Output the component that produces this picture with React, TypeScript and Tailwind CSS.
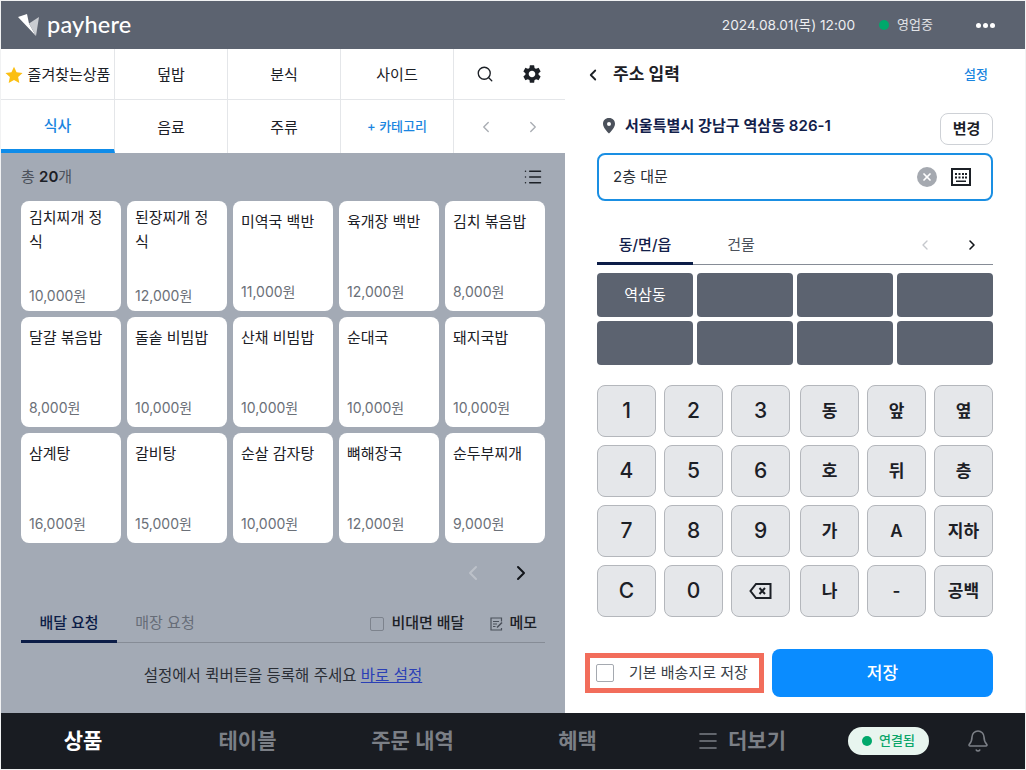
import React from 'react';
import { ChevronLeft, ChevronRight, Search, List, Bell, Menu, X } from 'lucide-react';
import { MdSettings } from 'react-icons/md';

const font = "font-['Inter','Noto_Sans_CJK_KR',sans-serif]";

const menuItems = [
  ['김치찌개 정식', '10,000원'],
  ['된장찌개 정식', '12,000원'],
  ['미역국 백반', '11,000원'],
  ['육개장 백반', '12,000원'],
  ['김치 볶음밥', '8,000원'],
  ['달걀 볶음밥', '8,000원'],
  ['돌솥 비빔밥', '10,000원'],
  ['산채 비빔밥', '10,000원'],
  ['순대국', '10,000원'],
  ['돼지국밥', '10,000원'],
  ['삼계탕', '16,000원'],
  ['갈비탕', '15,000원'],
  ['순살 감자탕', '10,000원'],
  ['뼈해장국', '12,000원'],
  ['순두부찌개', '9,000원'],
];

const keyRows = [
  ['1', '2', '3', '동', '앞', '옆'],
  ['4', '5', '6', '호', '뒤', '층'],
  ['7', '8', '9', '가', 'A', '지하'],
  ['C', '0', 'back', '나', '-', '공백'],
];

const Logo = () => (
  <svg width="21" height="22" viewBox="0 0 21 22">
    <path d="M0 3 L9 0 L11 9.5 L18 22 Z" fill="#ffffff" />
    <path d="M11 9.5 L21 3 L18 22 Z" fill="#c9ccd1" />
  </svg>
);

const Star = () => (
  <svg width="18" height="18" viewBox="0 0 24 24" className="mr-[5px] shrink-0">
    <path d="M12 1 L15.4 8.4 L23.4 9.3 L17.5 14.8 L19.1 22.8 L12 18.8 L4.9 22.8 L6.5 14.8 L0.6 9.3 L8.6 8.4 Z" fill="#fbbf12" />
  </svg>
);

const Pin = () => (
  <svg width="14" height="16" viewBox="0 0 14 16" className="mr-[9px] shrink-0">
    <path fillRule="evenodd" d="M7 0 C3.2 0 1 2.7 1 5.8 C1 9.6 5 13.6 7 15.6 C9 13.6 13 9.6 13 5.8 C13 2.7 10.8 0 7 0 Z M7 4 A2 2 0 1 1 7 8 A2 2 0 1 1 7 4 Z" fill="#4b515b" />
  </svg>
);

const KeyboardIcon = () => (
  <svg width="20" height="18" viewBox="0 0 20 18" className="shrink-0">
    <rect x="1" y="1" width="18" height="16" fill="none" stroke="#1c2026" strokeWidth="2" />
    <path d="M4 5h2v2H4zM7.5 5h2v2h-2zM11 5h2v2h-2zM14 5h2v2h-2zM4 8.5h2v2H4zM7.5 8.5h2v2h-2zM11 8.5h2v2h-2zM14 8.5h2v2h-2zM5 12.5h10v1.5H5z" fill="#1c2026" />
  </svg>
);

const BackspaceIcon = () => (
  <svg width="23" height="18" viewBox="0 0 23 18">
    <path d="M7 2 H21.5 V16 H7 L1.5 9 Z" fill="none" stroke="#1c2026" strokeWidth="2" strokeLinejoin="miter" />
    <path d="M10.5 6 L16 12 M16 6 L10.5 12" stroke="#1c2026" strokeWidth="2" />
  </svg>
);

const MemoIcon = () => (
  <svg width="13" height="14" viewBox="0 0 13 14" className="mr-[6px] shrink-0">
    <path d="M11.5 4.5 V1 H1 V13 H11.5 V11" fill="none" stroke="#4b515b" strokeWidth="1.2" />
    <path d="M3 4.5 H9 M3 7 H7 M3 9.5 H5.5" stroke="#4b515b" strokeWidth="1.1" />
    <path d="M7 10.5 L12 5.5" stroke="#4b515b" strokeWidth="1.6" />
  </svg>
);

const Key = ({ label }: { label: string }) => (
  <button className="w-[59px] h-[52px] rounded-lg bg-[#e5e7ea] border border-[#b4b7bc] flex items-center justify-center text-[#1c2026]">
    {label === 'back' ? (
      <BackspaceIcon />
    ) : (
      <span className={/[0-9C]/.test(label) ? 'text-[21px] font-medium' : 'text-[17px] font-semibold pt-px'}>{label}</span>
    )}
  </button>
);

const LeftPanel = () => (
  <div className="w-[564px] flex flex-col bg-[#a3aab5]">
    <div className="bg-white grid grid-cols-[114px_113px_113px_113px_1fr] text-[15px] text-[#1c2026]">
      <div className="h-[51px] flex items-center justify-center border-r border-b border-[#e4e6e9] pt-[2px] whitespace-nowrap">
        <Star />즐겨찾는상품
      </div>
      <div className="h-[51px] flex items-center justify-center border-r border-b border-[#e4e6e9] pt-[2px]">덮밥</div>
      <div className="h-[51px] flex items-center justify-center border-r border-b border-[#e4e6e9] pt-[2px]">분식</div>
      <div className="h-[51px] flex items-center justify-center border-r border-b border-[#e4e6e9] pt-[2px]">사이드</div>
      <div className="h-[51px] flex items-center justify-around px-[9px] border-b border-[#e4e6e9]">
        <Search className="w-[18px] h-[18px]" strokeWidth={1.8} />
        <MdSettings className="w-[22px] h-[22px]" />
      </div>
      <div className="h-[53px] flex items-center justify-center border-r border-[#e4e6e9] border-b-4 border-b-[#0f8ce9] text-[#1a85e0] font-medium pt-[3px]">식사</div>
      <div className="h-[53px] flex items-center justify-center border-r border-[#e4e6e9] pt-[3px]">음료</div>
      <div className="h-[53px] flex items-center justify-center border-r border-[#e4e6e9] pt-[3px]">주류</div>
      <div className="h-[53px] flex items-center justify-center border-r border-[#e4e6e9] text-[13px] font-medium text-[#1a85e0] pt-px">+ 카테고리</div>
      <div className="h-[53px] flex items-center justify-around px-[9px] text-[#a9adb3]">
        <ChevronLeft className="w-[18px] h-[18px]" strokeWidth={1.8} />
        <ChevronRight className="w-[18px] h-[18px]" strokeWidth={1.8} />
      </div>
    </div>

    <div className="flex-1 flex flex-col px-5">
      <div className="h-12 flex items-center justify-between text-[15px] text-[#4b515b]">
        <span className="pt-px">총 <b className="font-semibold text-[#1c2026]">20</b>개</span>
        <List className="w-[20px] h-[20px] mr-[2px] text-[#1c2026]" strokeWidth={1.8} />
      </div>
      <div className="grid grid-cols-[repeat(5,100px)] auto-rows-[110px] gap-[6px]">
        {menuItems.map(([name, price]) => {
          // two-line names sit a little higher, and their price a little lower
          const wrapped = name.length > 6;
          return (
            <div key={name} className={`bg-white rounded-lg px-2 flex flex-col justify-between ${wrapped ? 'pt-[5px] pb-[5px]' : 'pt-[9px] pb-[9px]'}`}>
              <div className="text-[15px] leading-[24px] text-[#1c2026]">{name}</div>
              <div className="text-[14px] leading-5 text-[#6b7078]">{price}</div>
            </div>
          );
        })}
      </div>
      <div className="h-[60px] flex items-center justify-end gap-[24px] pr-[12px]">
        <ChevronLeft className="w-6 h-6 text-[#bcc1c9]" strokeWidth={2} />
        <ChevronRight className="w-6 h-6 text-[#12151a]" strokeWidth={2} />
      </div>
      <div className="h-10 flex items-stretch border-b border-[#868c96] text-[15px]">
        <div className="w-24 -mb-px border-b-[3px] border-[#0c1d47] flex items-center justify-center font-medium text-[#0c1d47] pt-[3px]">배달 요청</div>
        <div className="w-24 flex items-center justify-center text-[#666c77] pt-[2px]">매장 요청</div>
        <div className="ml-auto flex items-center pr-2 text-[#1c2026] font-medium pt-[2px]">
          <span className="w-[14px] h-[14px] border border-[#7d838d] rounded-[2px] mr-[7px]" />
          <span>비대면 배달</span>
          <span className="w-[26px]" />
          <MemoIcon />
          <span>메모</span>
        </div>
      </div>
      <div className="h-16 flex items-center justify-center text-[15.5px] text-[#2a2e35] pt-px">
        설정에서 퀵버튼을 등록해 주세요&nbsp;<span className="underline text-[#2a3fb5]">바로 설정</span>
      </div>
    </div>
  </div>
);

const RightPanel = () => (
  <div className="flex-1 bg-white flex flex-col px-8">
    <div className="h-[52px] flex items-center text-[#1c2026]">
      <ChevronLeft className="w-[18px] h-[18px] -ml-[13px]" strokeWidth={2.4} />
      <span className="ml-[11px] text-[17px] font-semibold">주소 입력</span>
      <span className="ml-auto mr-[5px] text-[13px] font-medium text-[#1a85e0]">설정</span>
    </div>
    <div className="mt-3 h-8 flex justify-between">
      <div className="flex items-center h-6 pl-[5px] text-[15px] font-semibold text-[#12204a] pt-[2px] tracking-[0.05px]">
        <Pin />
        서울특별시 강남구 역삼동 826-1
      </div>
      <button className="w-[53px] h-8 rounded-lg border border-[#ced1d6] text-[15px] font-semibold text-[#1c2026]">변경</button>
    </div>
    <div className="mt-2 h-12 rounded-lg border-2 border-[#1a8fe3] flex items-center pl-[14px] pr-[20px] text-[15px] text-[#2a2e35]">
      <span className="pt-px">2층 대문</span>
      <span className="ml-auto w-5 h-5 rounded-full bg-[#a5a9b0] flex items-center justify-center mr-[14px]">
        <X className="w-3 h-3 text-white" strokeWidth={3.5} />
      </span>
      <KeyboardIcon />
    </div>
    <div className="mt-6 h-10 flex items-stretch border-b border-[#868c96] text-[15px]">
      <div className="w-24 -mb-px border-b-[3px] border-[#0c1d47] flex items-center justify-center font-medium text-[#12204a] pt-[3px]">동/면/읍</div>
      <div className="w-24 flex items-center justify-center text-[#4b515b] pt-[2px]">건물</div>
      <div className="ml-auto flex items-center gap-[31px] pr-[13px]">
        <ChevronLeft className="w-4 h-4 text-[#c5c8cd]" strokeWidth={2} />
        <ChevronRight className="w-4 h-4 text-[#12151a]" strokeWidth={2.4} />
      </div>
    </div>
    <div className="mt-2 grid grid-cols-4 gap-1 auto-rows-[44px]">
      <div className="rounded-[4px] bg-[#5c6370] flex items-center justify-center text-[15px] text-white">역삼동</div>
      {Array.from({ length: 7 }).map((_, i) => (
        <div key={i} className="rounded-[4px] bg-[#5c6370]" />
      ))}
    </div>
    <div className="mt-5 flex flex-col gap-2">
      {keyRows.map((row, i) => (
        <div key={i} className="flex justify-between">
          <div className="flex gap-2">{row.slice(0, 3).map((k) => <Key key={k} label={k} />)}</div>
          <div className="flex gap-2">{row.slice(3).map((k) => <Key key={k} label={k} />)}</div>
        </div>
      ))}
    </div>
    <div className="mt-8 -ml-3 flex items-center justify-between">
      <div className="w-[179px] h-10 border-[5px] border-[#f26d5b] flex items-center pl-[6px] text-[15px] text-[#3a3f47] whitespace-nowrap">
        <span className="w-[18px] h-[18px] border border-[#a5a9b0] rounded-[2px] mr-[15px] shrink-0" />
        기본 배송지로 저장
      </div>
      <button className="w-[221px] h-12 rounded-lg bg-[#0a8cff] text-white text-[17px] font-medium pt-px">저장</button>
    </div>
  </div>
);

export default function App() {
  return (
    <div className={`w-[1026px] h-[770px] p-px flex flex-col bg-[#f1f2f3] ${font}`}>
      <header className="h-12 shrink-0 bg-[#5c6370] flex items-center pl-[17px] pr-[30px] text-white">
        <Logo />
        <span className="ml-2 text-[23.5px] font-medium font-['Lato',sans-serif] tracking-[0.2px]">payhere</span>
        <span className="ml-auto text-[13.7px] text-[#eceef0]">2024.08.01(목) 12:00</span>
        <span className="ml-6 w-[10px] h-[10px] rounded-full bg-[#00a86b]" />
        <span className="ml-2 text-[13px] text-[#e2e4e8]">영업중</span>
        <span className="ml-[43px] flex gap-[2px]">
          <i className="w-[5px] h-[5px] rounded-full bg-white" />
          <i className="w-[5px] h-[5px] rounded-full bg-white" />
          <i className="w-[5px] h-[5px] rounded-full bg-white" />
        </span>
      </header>
      <main className="flex-1 flex min-h-0">
        <LeftPanel />
        <RightPanel />
      </main>
      <nav className="h-14 shrink-0 bg-[#191c22] flex items-center text-[21px] font-semibold text-[#7b7f86]">
        <span className="w-[164px] text-center text-white">상품</span>
        <span className="w-[165px] text-center">테이블</span>
        <span className="w-[165px] text-center">주문 내역</span>
        <span className="w-[165px] text-center">혜택</span>
        <span className="ml-[36px] flex items-center gap-2">
          <Menu className="w-[24px] h-[24px]" strokeWidth={1.6} />
          더보기
        </span>
        <span className="ml-[62px] w-[81px] h-[28px] rounded-full bg-[#e8f5ef] flex items-center justify-center gap-[7px] text-[13px] font-medium text-[#0ba66a]">
          <i className="w-[10px] h-[10px] rounded-full bg-[#00a86b]" />
          연결됨
        </span>
        <Bell className="ml-[37px] w-[24px] h-[24px]" strokeWidth={1.6} />
      </nav>
    </div>
  );
}
